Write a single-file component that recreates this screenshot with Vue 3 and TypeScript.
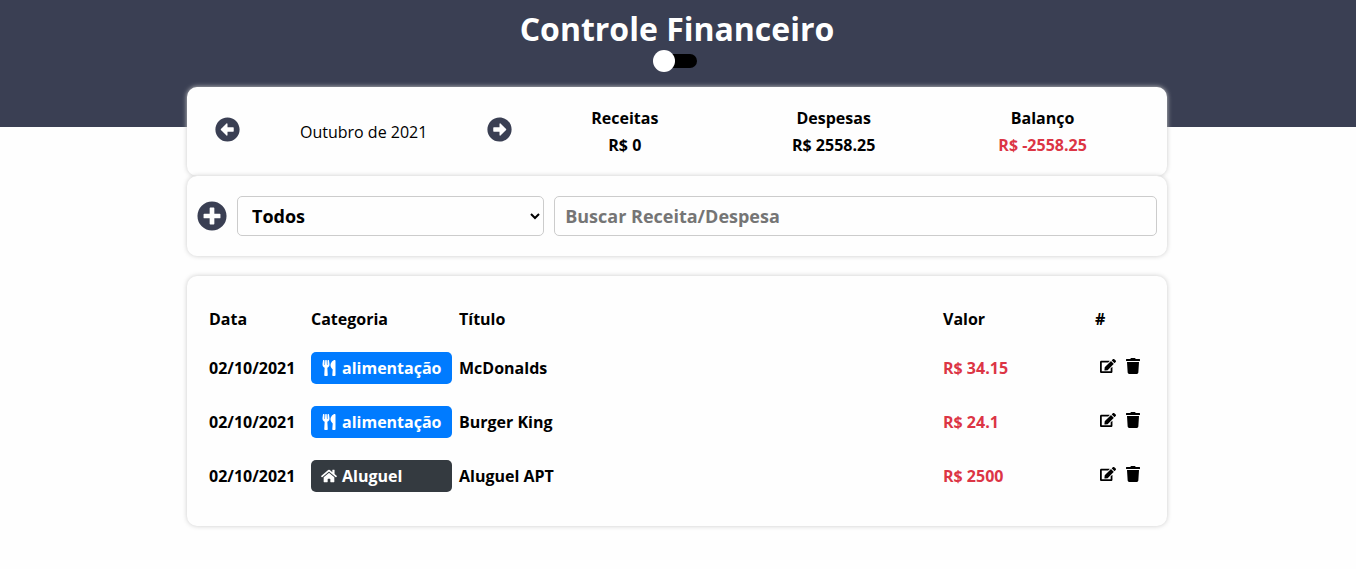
<script setup lang="ts">
import { ref } from 'vue'

interface Entry {
  id: number
  date: string
  category: string
  kind: 'food' | 'rent'
  title: string
  value: string
}

const entries: Entry[] = [
  { id: 1, date: '02/10/2021', category: 'alimentação', kind: 'food', title: 'McDonalds', value: 'R$ 34.15' },
  { id: 2, date: '02/10/2021', category: 'alimentação', kind: 'food', title: 'Burger King', value: 'R$ 24.1' },
  { id: 3, date: '02/10/2021', category: 'Aluguel', kind: 'rent', title: 'Aluguel APT', value: 'R$ 2500' },
]

const totals = [
  { label: 'Receitas', value: 'R$ 0', negative: false },
  { label: 'Despesas', value: 'R$ 2558.25', negative: false },
  { label: 'Balanço', value: 'R$ -2558.25', negative: true },
]

const dark = ref(false)
const filter = ref('Todos')
const search = ref('')
</script>

<template>
  <div class="page">
    <header class="top">
      <h1>Controle Financeiro</h1>
      <label class="switch">
        <input v-model="dark" type="checkbox" role="switch" aria-label="Tema escuro" />
        <span class="track"></span>
      </label>
    </header>

    <main>
      <section class="card summary">
        <div class="month">
          <button type="button" aria-label="Mês anterior">
            <svg class="arrow" viewBox="0 0 512 512"><path d="M256 504C119 504 8 393 8 256S119 8 256 8s248 111 248 248-111 248-248 248zm116-292H256v-70.9c0-10.700-13-16.100-20.500-8.500L121.200 247.500c-4.700 4.700-4.700 12.200 0 16.900l114.300 114.900c7.600 7.600 20.500 2.200 20.500-8.500V300h116c6.600 0 12-5.400 12-12v-64c0-6.600-5.400-12-12-12z" /></svg>
          </button>
          <span>Outubro de 2021</span>
          <button type="button" aria-label="Próximo mês">
            <svg class="arrow" viewBox="0 0 512 512"><path transform="matrix(-1 0 0 1 512 0)" d="M256 504C119 504 8 393 8 256S119 8 256 8s248 111 248 248-111 248-248 248zm116-292H256v-70.9c0-10.700-13-16.100-20.500-8.500L121.200 247.500c-4.700 4.700-4.700 12.200 0 16.900l114.300 114.900c7.600 7.600 20.500 2.200 20.500-8.500V300h116c6.600 0 12-5.400 12-12v-64c0-6.600-5.400-12-12-12z" /></svg>
          </button>
        </div>
        <dl class="totals">
          <div v-for="t in totals" :key="t.label">
            <dt>{{ t.label }}</dt>
            <dd :class="{ negative: t.negative }">{{ t.value }}</dd>
          </div>
        </dl>
      </section>

      <section class="card filters">
        <button type="button" aria-label="Adicionar">
          <svg class="plus" viewBox="0 0 512 512"><path d="M256 8a248 248 0 1 0 0 496 248 248 0 0 0 0-496zm144 276c0 7-5 12-12 12h-92v92c0 7-5 12-12 12h-56c-7 0-12-5-12-12v-92h-92c-7 0-12-5-12-12v-56c0-7 5-12 12-12h92v-92c0-7 5-12 12-12h56c7 0 12 5 12 12v92h92c7 0 12 5 12 12z" /></svg>
        </button>
        <select v-model="filter" aria-label="Tipo">
          <option>Todos</option>
          <option>Receitas</option>
          <option>Despesas</option>
        </select>
        <input v-model="search" type="text" placeholder="Buscar Receita/Despesa" aria-label="Buscar Receita/Despesa" />
      </section>

      <section class="card list">
        <table>
          <thead>
            <tr>
              <th class="date">Data</th>
              <th class="category">Categoria</th>
              <th>Título</th>
              <th class="value">Valor</th>
              <th class="actions">#</th>
            </tr>
          </thead>
          <tbody>
            <tr v-for="e in entries" :key="e.id">
              <td>{{ e.date }}</td>
              <td>
                <div class="badge" :class="e.kind">
                  <svg v-if="e.kind === 'food'" viewBox="0 0 416 512"><path d="M207.900 15.200c.8 4.700 16.100 94.500 16.100 128.800 0 52.300-27.800 89.600-68.900 104.600L168 486.700c.7 13.700-10.200 25.300-24 25.300H80c-13.700 0-24.700-11.500-24-25.300l12.900-238.100C27.700 233.600 0 196.200 0 144 0 109.600 15.300 19.900 16.100 15.200 19.300-5.100 61.400-5.400 64 16.300v141.200c1.300 3.400 15.100 3.200 16 0 1.400-25.300 7.900-139.200 8-141.800 3.300-20.800 44.700-20.800 47.900 0 .2 2.700 6.600 116.500 8 141.800.9 3.200 14.800 3.400 16 0V16.300c2.600-21.600 44.800-21.400 48-1.100zm119.200 285.700l-15 185.100c-1.200 14 9.900 26 23.900 26h56c13.300 0 24-10.700 24-24V24c0-13.200-10.700-24-24-24-82.500 0-221.400 178.500-64.900 300.900z" /></svg>
                  <svg v-else viewBox="0 0 576 512"><path d="M280.400 148.300L96 300.100V464a16 16 0 0 0 16 16l112.100-.3a16 16 0 0 0 15.900-16V368a16 16 0 0 1 16-16h64a16 16 0 0 1 16 16v95.600a16 16 0 0 0 16 16.100L464 480a16 16 0 0 0 16-16V300L295.700 148.300a12.200 12.200 0 0 0-15.300 0zM571.600 251.500L488 182.600V44a12 12 0 0 0-12-12h-56a12 12 0 0 0-12 12v72.600L318.500 43a48 48 0 0 0-61 0L4.300 251.500a12 12 0 0 0-1.600 16.900l25.500 31a12 12 0 0 0 16.900 1.600L280.400 107a12.200 12.200 0 0 1 15.300 0L530.900 301a12 12 0 0 0 16.900-1.600l25.500-31a12 12 0 0 0-1.700-16.900z" /></svg>
                  <span>{{ e.category }}</span>
                </div>
              </td>
              <td>{{ e.title }}</td>
              <td class="negative">{{ e.value }}</td>
              <td>
                <div class="icons">
                  <button type="button" aria-label="Editar">
                    <svg viewBox="0 0 576 512"><path d="M402.600 83.200l90.200 90.200c3.800 3.800 3.800 10 0 13.800L274.400 405.600l-92.800 10.300c-12.400 1.400-22.900-9.100-21.500-21.500l10.300-92.800L388.800 83.200c3.800-3.800 10-3.800 13.800 0zm162-22.900l-48.800-48.800c-15.200-15.200-39.900-15.200-55.200 0l-35.400 35.400c-3.800 3.800-3.800 10 0 13.800l90.200 90.200c3.800 3.800 10 3.800 13.800 0l35.400-35.400c15.200-15.300 15.200-40 0-55.200zM384 346.200V448H64V128h229.800c3.200 0 6.200-1.300 8.500-3.500l40-40c7.600-7.600 2.200-20.500-8.500-20.500H48C21.500 64 0 85.500 0 112v352c0 26.500 21.500 48 48 48h352c26.500 0 48-21.500 48-48V306.200c0-10.700-12.900-16-20.500-8.500l-40 40c-2.200 2.300-3.500 5.300-3.500 8.500z" /></svg>
                  </button>
                  <button type="button" aria-label="Excluir">
                    <svg viewBox="0 0 448 512"><path d="M432 32H312l-9.400-18.700A24 24 0 0 0 281.100 0H166.800a23.700 23.700 0 0 0-21.400 13.300L136 32H16A16 16 0 0 0 0 48v32a16 16 0 0 0 16 16h416a16 16 0 0 0 16-16V48a16 16 0 0 0-16-16zM53.200 467a48 48 0 0 0 47.900 45h245.800a48 48 0 0 0 47.900-45L416 128H32z" /></svg>
                  </button>
                </div>
              </td>
            </tr>
          </tbody>
        </table>
      </section>
    </main>
  </div>
</template>

<style>
body {
  margin: 0;
  background: #fefefe;
}
</style>

<style scoped>
.page {
  padding-bottom: 40px;
  font: 700 16px/22px "Open Sans", sans-serif;
  color: #000;
}

.page *,
.page *::before {
  box-sizing: border-box;
}

.top {
  height: 127px;
  padding: 7px 2px 0 0;
  background: #3a3f53;
  text-align: center;
}

h1 {
  margin: 0 0 1px;
  color: #fff;
  font-size: 32px;
  font-weight: 700;
  line-height: 44px;
}

.switch {
  display: flex;
  justify-content: center;
  width: 40px;
  margin: 0 auto;
}

.switch input {
  position: absolute;
  opacity: 0;
  margin: 0;
}

.track {
  display: flex;
  align-items: center;
  width: 40px;
  height: 14px;
  margin: 2px 0;
  border-radius: 7px;
  background: #000;
}

.track::before {
  content: "";
  width: 22px;
  height: 22px;
  flex: none;
  margin: 0 -4px;
  border-radius: 50%;
  background: #fff;
}

.switch input:checked + .track {
  justify-content: flex-end;
}

main {
  max-width: 982px;
  margin: -40px auto 0;
  padding-right: 2px;
}

.card {
  border-radius: 10px;
  background: #fefefe;
  box-shadow: 0 0 5px #ccc;
}

.summary {
  display: grid;
  grid-template-columns: 1fr 2fr;
  padding: 20px;
}

button {
  display: flex;
  padding: 0;
  border: 0;
  background: none;
  color: inherit;
  cursor: pointer;
}

svg {
  width: 16px;
  height: 16px;
  fill: currentColor;
}

.month {
  display: flex;
  align-items: center;
  justify-content: space-between;
  padding: 0 8px;
  font-weight: 400;
}

.month button,
.filters button {
  color: #3a3f53;
}

.arrow {
  width: 25px;
  height: 25px;
  margin-bottom: 4px;
}

.totals {
  display: flex;
  margin: 0;
  text-align: center;
}

.totals div {
  flex: 1;
}

dd {
  margin: 5px 0 0;
}

.negative {
  color: #dc3545;
}

.filters {
  display: flex;
  align-items: center;
  gap: 10px;
  padding: 20px 10px;
}

.plus {
  width: 30px;
  height: 30px;
}

select,
.filters input {
  height: 40px;
  padding: 0 10px;
  border: 1px solid #ccc;
  border-radius: 5px;
  background: #fefefe;
  color: #000;
  font: inherit;
  font-size: 18px;
}

select {
  width: 32%;
}

.filters input {
  flex: 1;
  min-width: 0;
}

.filters input::placeholder {
  color: #757575;
}

.list {
  margin-top: 20px;
  padding: 20px 20px 22px;
}

table {
  width: 100%;
  table-layout: fixed;
  border-spacing: 2px;
}

th,
td {
  padding: 10px 0;
  text-align: left;
}

.date {
  width: 100px;
}

.category {
  width: 146px;
}

.value {
  width: 150px;
}

.actions {
  width: 50px;
}

.badge {
  display: flex;
  align-items: center;
  gap: 5px;
  height: 32px;
  margin-right: 5px;
  padding: 0 10px;
  border-radius: 5px;
  color: #fff;
}

.food {
  background: #007bff;
}

.rent {
  background: #343a40;
}

.icons {
  display: flex;
  gap: 9px;
  padding: 0 0 4px 5px;
}
</style>
